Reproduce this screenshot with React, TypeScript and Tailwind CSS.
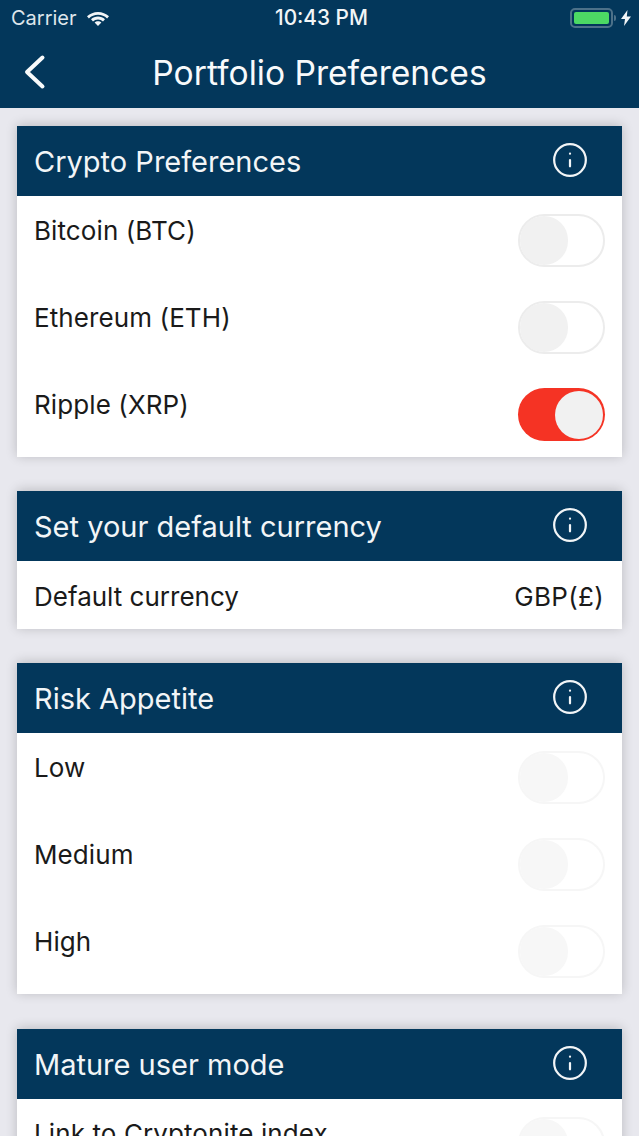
import { Info } from "lucide-react";

const font = "font-['Inter','Liberation_Sans',sans-serif]";

const Toggle = ({ on = false, faded = false }: { on?: boolean; faded?: boolean }) => {
  if (on) {
    return (
      <div className="flex h-[53px] w-[87px] items-center justify-end rounded-full bg-[#f53324] pr-[2px]">
        <div className="h-[48px] w-[48px] rounded-full bg-[#f1f1f1]" />
      </div>
    );
  }
  return (
    <div
      className={`h-[53px] w-[87px] rounded-full border-2 bg-white ${
        faded ? "border-[#f6f6f6]" : "border-[#ececec]"
      }`}>
      <div className={`h-[49px] w-[48px] rounded-full ${faded ? "bg-[#f7f7f7]" : "bg-[#f1f1f1]"}`} />
    </div>
  );
};

const Row = ({ label, on, faded }: { label: string; on?: boolean; faded?: boolean }) => (
  <div className="flex h-[87px] items-start justify-between pl-[17px] pr-[17px] pt-[17px]">
    <span className="text-[26px] leading-[36px] tracking-[0.1px] text-[#1a1a1a]">{label}</span>
    <div className="mt-[1px]">
      <Toggle on={on} faded={faded} />
    </div>
  </div>
);

const Card = ({ title, children }: { title: string; children: React.ReactNode }) => (
  <section className="bg-white shadow-[0_-1px_11px_rgba(0,0,0,0.2)]">
    <div className="flex h-[70px] items-center justify-between bg-[#03375b] pl-[17px] pr-[33px]">
      <h2 className="pt-[1px] text-[29px] font-normal leading-none text-[#f2f5f7]">{title}</h2>
      <Info className="mb-[2px] h-[38px] w-[38px] text-[#f2f5f7]" strokeWidth={1.4} />
    </div>
    {children}
  </section>
);

export default function App() {
  return (
    <div className={`${font} h-[1136px] w-[639px] overflow-hidden bg-[#e8e8ee]`}>
      <header className="h-[108px] bg-[#03375b] text-white">
        <div className="relative flex h-[36px] items-center justify-between pl-[11px] pr-[8px]">
          <div className="flex items-center gap-[9px]">
            <span className="text-[20px] text-[#dfe6eb]">Carrier</span>
            <svg width="24" height="18" viewBox="0 0 24 18" fill="#f2f5f7">
              <path d="M12 3C7.8 3 4 4.600 1 7.300L2.900 9.400C5.400 7.200 8.600 5.800 12 5.800S18.600 7.200 21.100 9.400L23 7.300C20 4.600 16.200 3 12 3Z" />
              <path d="M12 7.600C9.300 7.600 6.900 8.600 5 10.300L7 12.400C8.300 11.200 10.100 10.400 12 10.400S15.700 11.200 17 12.400L19 10.300C17.100 8.600 14.700 7.600 12 7.600Z" />
              <path d="M12 12.200C10.700 12.200 9.500 12.700 8.600 13.500L12 17L15.400 13.500C14.500 12.700 13.300 12.200 12 12.200Z" />
            </svg>
          </div>
          <span className="absolute left-[275px] text-[20.8px] font-medium text-[#f2f5f7]">10:43 PM</span>
          <div className="flex items-center gap-[5px]">
            <div className="flex items-center gap-[1px]">
              <div className="h-[20px] w-[43px] rounded-[5px] border-2 border-[#4d7189] p-[2px]">
                <div className="h-full w-full rounded-[2px] bg-[#4cd964]" />
              </div>
              <div className="h-[6px] w-[2px] rounded-r-full bg-[#4d7189]" />
            </div>
            <svg width="10" height="16" viewBox="0 0 10 16" fill="#f2f5f7">
              <path d="M6.500 0L0 9H4L3 16L10 6.500H5.800Z" />
            </svg>
          </div>
        </div>
        <div className="relative flex h-[72px] items-center justify-center">
          <svg
            className="absolute left-[22px] top-[18px]"
            width="26"
            height="36"
            viewBox="0 0 26 36"
            fill="none"
            stroke="#f8fafb"
            strokeWidth="4"
            strokeLinecap="round"
            strokeLinejoin="round">
            <path d="M20.500 3.500L5 18L20.500 32.500" />
          </svg>
          <h1 className="pt-[1px] text-[33.6px] font-normal leading-none text-[#f8fafb]">Portfolio Preferences</h1>
        </div>
      </header>

      <main className="flex flex-col pl-[17px] pr-[17px] pt-[18px]">
        <Card title="Crypto Preferences">
          <Row label="Bitcoin (BTC)" />
          <Row label="Ethereum (ETH)" />
          <Row label="Ripple (XRP)" on />
        </Card>
        <div className="mt-[34px]">
          <Card title="Set your default currency">
            <div className="flex h-[68px] items-center justify-between pl-[17px] pr-[18px] pt-[2px] text-[26px] text-[#1a1a1a]">
              <span>Default currency</span>
              <span className="tracking-[0.3px]">GBP(£)</span>
            </div>
          </Card>
        </div>
        <div className="mt-[34px]">
          <Card title="Risk Appetite">
            <Row label="Low" faded />
            <Row label="Medium" faded />
            <Row label="High" faded />
          </Card>
        </div>
        <div className="mt-[35px]">
          <Card title="Mature user mode">
            <Row label="Link to Cryptonite index" faded />
          </Card>
        </div>
      </main>
    </div>
  );
}
